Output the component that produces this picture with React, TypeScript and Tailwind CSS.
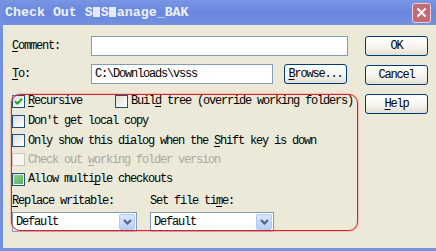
import React from "react";

const mono = "font-['Liberation_Mono',monospace] text-[12px] tracking-[-1.2px] leading-none";

function U({ children }: { children: React.ReactNode }) {
  return <span className="underline underline-offset-[2px] decoration-1">{children}</span>;
}

function XpButton({ children }: { children: React.ReactNode }) {
  return (
    <div
      className={`${mono} flex items-center justify-center w-[63px] h-[20px] rounded-[3px] border border-[#003c74] bg-[linear-gradient(180deg,#ffffff_0%,#f5f4ef_55%,#e2dfd3_100%)] text-black`}
    >
      {children}
    </div>
  );
}

function Check({ state }: { state: "on" | "off" | "mixed" | "disabled" }) {
  if (state === "disabled") {
    return <div className="w-[13px] h-[13px] shrink-0 border border-[#cac8bb] bg-[#f7f6f1]" />;
  }
  return (
    <div className="w-[13px] h-[13px] shrink-0 border border-[#1c5180] bg-[linear-gradient(135deg,#dcdcd7_0%,#ffffff_100%)] flex items-center justify-center">
      {state === "on" && (
        <svg width="9" height="9" viewBox="0 0 9 9">
          <path d="M1 4.2 L3.4 6.6 L8 1.8" fill="none" stroke="#21a121" strokeWidth="2" />
        </svg>
      )}
      {state === "mixed" && <div className="w-[9px] h-[9px] bg-[linear-gradient(135deg,#8fd08f_0%,#5aae5f_100%)]" />}
    </div>
  );
}

function Dropdown({ width }: { width: string }) {
  return (
    <div className={`${width} h-[20px] border border-[#7f9db9] bg-white flex items-center justify-between pl-[3px] pr-[1px]`}>
      <span className={mono}>Default</span>
      <div className="w-[16px] h-[16px] rounded-[2px] bg-[linear-gradient(180deg,#dbe5fc_0%,#b9cdf7_100%)] border border-[#b6c8f0] flex items-center justify-center">
        <svg width="9" height="6" viewBox="0 0 9 6">
          <path d="M1 1 L4.5 4.5 L8 1" fill="none" stroke="#4d6185" strokeWidth="2" />
        </svg>
      </div>
    </div>
  );
}

export default function App() {
  return (
    <div className="relative w-[436px] h-[251px] bg-[#ece9d8] border-l-[3px] border-[#7490e0] flex flex-col overflow-hidden">
      <div className="h-[25px] shrink-0 flex items-center justify-between pl-[2px] pr-[5px] bg-[linear-gradient(180deg,#7896e3_0%,#6887de_50%,#7390e0_100%)]">
        <div className="font-['Liberation_Mono',monospace] text-[13.3px] font-bold text-[#eef2fc] leading-none flex items-center">
          Check Out S
          <span className="inline-block w-[7px] h-[10px] bg-[#e4eafa] mx-[0.5px]" />S
          <span className="inline-block w-[7px] h-[10px] bg-[#e4eafa] mx-[0.5px]" />anage_BAK
        </div>
        <div className="w-[19px] h-[20px] rounded-[3px] border border-[#e8d0d4] bg-[#c46a75] flex items-center justify-center">
          <svg width="11" height="11" viewBox="0 0 11 11">
            <path d="M1.5 1.5 L9.5 9.5 M9.5 1.5 L1.5 9.5" stroke="#ffffff" strokeWidth="2" />
          </svg>
        </div>
      </div>

      <div className="flex-1 flex pl-[9px] pt-[11px]">
        <div className="w-[350px] flex flex-col">
          <div className="flex items-center h-[20px]">
            <span className={`${mono} w-[79px]`}>
              <U>C</U>omment:
            </span>
            <div className="w-[257px] h-[20px] border border-[#7f9db9] bg-white" />
          </div>
          <div className="flex items-center h-[20px] mt-[8px]">
            <span className={`${mono} w-[79px]`}>
              <U>T</U>o:
            </span>
            <div className="w-[182px] h-[20px] border border-[#7f9db9] bg-white flex items-center pl-[3px]">
              <span className={mono}>C:\Downloads\vsss</span>
            </div>
            <div className="ml-[11px]">
              <XpButton>
                <span>
                  <U>B</U>rowse...
                </span>
              </XpButton>
            </div>
          </div>

          <div className="flex items-center h-[20px] mt-[7px]">
            <div className="flex items-center gap-[3px] w-[103px]">
              <Check state="on" />
              <span className={mono}>
                <U>R</U>ecursive
              </span>
            </div>
            <div className="flex items-center gap-[3px]">
              <Check state="off" />
              <span className={mono}>
                Buil<U>d</U> tree (override working folders)
              </span>
            </div>
          </div>
          <div className="flex items-center gap-[3px] h-[20px]">
            <Check state="off" />
            <span className={mono}>Don't get local copy</span>
          </div>
          <div className="flex items-center gap-[3px] h-[19px]">
            <Check state="off" />
            <span className={mono}>
              Only show this dialog when the <U>S</U>hift key is down
            </span>
          </div>
          <div className="flex items-center gap-[3px] h-[19px]">
            <Check state="disabled" />
            <span className={`${mono} text-[#aca899]`}>
              Check out <U>w</U>orking folder version
            </span>
          </div>
          <div className="flex items-center gap-[3px] h-[20px]">
            <Check state="mixed" />
            <span className={mono}>
              Allow multi<U>p</U>le checkouts
            </span>
          </div>

          <div className="flex gap-[13px] mt-[5px]">
            <div className="flex flex-col gap-[4px]">
              <span className={`${mono} h-[14px] flex items-center`}>
                <U>R</U>eplace writable:
              </span>
              <Dropdown width="w-[125px]" />
            </div>
            <div className="flex flex-col gap-[4px]">
              <span className={`${mono} h-[14px] flex items-center`}>
                Set file ti<U>m</U>e:
              </span>
              <Dropdown width="w-[124px]" />
            </div>
          </div>
        </div>

        <div className="ml-[3px] flex flex-col gap-[9px]">
          <XpButton>OK</XpButton>
          <XpButton>Cancel</XpButton>
          <XpButton>
            <span>
              <U>H</U>elp
            </span>
          </XpButton>
        </div>
      </div>

      <div className="h-[3px] shrink-0 bg-[#7490e0]" />

      <div className="absolute left-[8px] top-[94px] w-[347px] h-[137px] rounded-[9px] border border-[#d0262a] shadow-[0_0_1px_1px_rgba(255,160,160,0.6)] pointer-events-none" />
    </div>
  );
}
